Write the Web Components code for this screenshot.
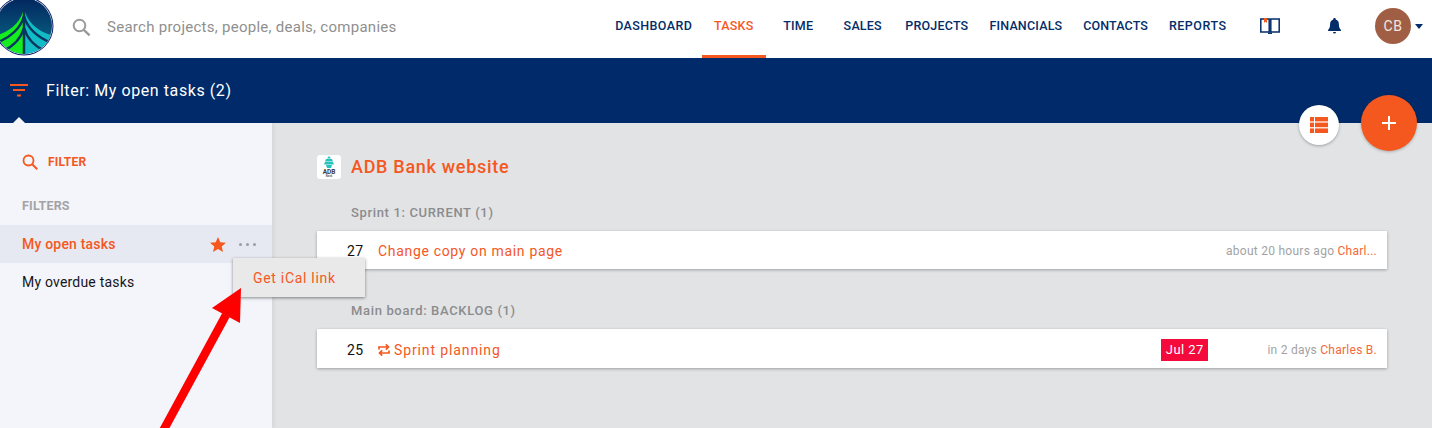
<!DOCTYPE html>
<html>
<head>
<meta charset="utf-8">
<title>Tasks</title>
<style>
  html, body { margin: 0; height: 428px; overflow: hidden; }
  body { font-family: Roboto, "Liberation Sans", sans-serif; background: #e2e3e5; }
  app-shell { width: 1432px; height: 428px; }
</style>
</head>
<body>
<app-shell>
  <top-nav slot="top"></top-nav>
  <filter-bar slot="top">Filter: My open tasks (2)</filter-bar>
  <filter-panel slot="side"></filter-panel>
  <project-group name="ADB Bank website">
    <task-list heading="Sprint 1: CURRENT (1)">
      <task-row num="27" name="Change copy on main page" when="about 20 hours ago" who="Charl..."></task-row>
    </task-list>
    <task-list heading="Main board: BACKLOG (1)">
      <task-row num="25" name="Sprint planning" when="in 2 days" who="Charles B." due="Jul 27" repeat></task-row>
    </task-list>
  </project-group>
</app-shell>

<script>
const ORANGE = '#f4581f';

class AppShell extends HTMLElement {
  constructor() {
    super();
    this.attachShadow({ mode: 'open' });
    this.shadowRoot.innerHTML = `
      <style>
        :host { display: flex; flex-direction: column; position: relative; overflow: hidden; }
        .body { display: flex; flex: 1; min-height: 0; }
        .main { flex: 1; padding: 32px 45px 0; min-width: 0; }
        .fab { position: absolute; border-radius: 50%; display: flex; align-items: center; justify-content: center; }
        .list { left: 1299px; top: 105px; width: 40px; height: 40px; background: #fff; box-shadow: 0 1px 3px rgba(0,0,0,.3); }
        .add { left: 1361px; top: 95px; width: 56px; height: 56px; background: ${ORANGE}; box-shadow: 0 1px 3px rgba(0,0,0,.25); }
        .arrow { position: absolute; left: 150px; top: 285px; }
        .menu { position: absolute; left: 233px; top: 258px; width: 132px; height: 39px; box-sizing: border-box; padding-left: 20px;
          display: flex; align-items: center; background: #e9e9e9; color: ${ORANGE}; font-size: 14px; letter-spacing: .7px;
          box-shadow: 0 1px 3px rgba(0,0,0,.45); }
      </style>
      <slot name="top"></slot>
      <div class="body">
        <slot name="side"></slot>
        <div class="main"><slot></slot></div>
      </div>
      <div class="fab list">
        <svg width="18" height="16" viewBox="0 0 18 16" fill="${ORANGE}">
          <rect x="0" y="0" width="4" height="4.4"/><rect x="5" y="0" width="13" height="4.4"/>
          <rect x="0" y="5.6" width="4" height="4.6"/><rect x="5" y="5.6" width="13" height="4.6"/>
          <rect x="0" y="11.4" width="4" height="4.6"/><rect x="5" y="11.4" width="13" height="4.6"/>
        </svg>
      </div>
      <div class="fab add">
        <svg width="14" height="14" viewBox="0 0 14 14" stroke="#fff" stroke-width="2"><path d="M7 0v14M0 7h14"/></svg>
      </div>
      <div class="menu">Get iCal link</div>
      <svg class="arrow" width="100" height="145" viewBox="0 0 100 145">
        <path d="M13 146L76 30" stroke="#fe0000" stroke-width="8.500" fill="none"/>
        <path d="M91 3L62 23L90 38Z" fill="#fe0000"/>
      </svg>
    `;
  }
}

class TopNav extends HTMLElement {
  constructor() {
    super();
    this.attachShadow({ mode: 'open' });
    const items = ['DASHBOARD', 'TASKS', 'TIME', 'SALES', 'PROJECTS', 'FINANCIALS', 'CONTACTS', 'REPORTS'];
    this.shadowRoot.innerHTML = `
      <style>
        :host { display: flex; align-items: center; height: 58px; background: #fff; overflow: hidden; flex: none; }
        .logo { align-self: flex-start; margin: -4px 6px 0 -6px; flex: none; }
        .search { display: flex; align-items: center; flex: 1; color: #8f8f8f; font-size: 15px; letter-spacing: .27px; padding: 0 0 4px 12px; }
        .search svg { margin-right: 16px; }
        nav { display: flex; height: 58px; margin-right: 1px; }
        nav a { display: flex; align-items: center; justify-content: center; box-sizing: border-box; height: 58px; min-width: 64px; padding: 0 10.500px 8px;
          color: #032d68; font-size: 12.500px; font-weight: 500; letter-spacing: .2px; }
        nav a.DASHBOARD { letter-spacing: .4px; padding-right: 9.500px; }
        nav a.TIME { min-width: 65px; }
        nav a.CONTACTS { letter-spacing: .1px; }
        nav a.REPORTS { letter-spacing: .5px; }
        nav a.on { color: ${ORANGE}; border-bottom: 3px solid ${ORANGE}; padding-bottom: 5px; }
        .tools { display: flex; align-items: center; width: 194px; height: 58px; box-sizing: border-box; padding: 0 0 6px 22px; flex: none; }
        .book { margin-right: 48px; }
        .bell { margin-right: 34px; }
        .avatar { width: 36px; height: 36px; border-radius: 50%; background: #a05f45; color: #f2e6e0; margin-right: 4px;
          display: flex; align-items: center; justify-content: center; font-size: 14px; letter-spacing: .5px; flex: none; }
        .caret { width: 0; height: 0; border: 4.5px solid transparent; border-top: 5px solid #032d68; border-bottom: 0; }
      </style>
      <svg class="logo" width="60" height="60" viewBox="0 0 60 60">
        <defs>
          <linearGradient id="sky" x1="0" y1="0" x2="0" y2="1"><stop offset="0" stop-color="#02265f"/><stop offset="1" stop-color="#0a6f8a"/></linearGradient>
          <clipPath id="disc"><circle cx="30" cy="30" r="28"/></clipPath>
        </defs>
        <circle cx="30" cy="30" r="29.500" fill="#0e1f6b"/>
        <circle cx="30" cy="30" r="28.500" fill="#dfe6ee"/>
        <circle cx="30" cy="30" r="28" fill="url(#sky)"/>
        <g clip-path="url(#disc)">
          <path d="M30 11C28 26 16 36 0 40L4 60L30 60Z" fill="#15ee1e"/>
          <path d="M30 11C32 26 44 36 60 40L56 60L30 60Z" fill="#12bcc6"/>
          <g fill="none" stroke="#08365f" stroke-width="2.500">
            <path d="M30 20C27 32 16 42 2 47"/><path d="M30 32C27 42 20 50 9 55"/>
            <path d="M30 20C33 32 44 42 58 47"/><path d="M30 32C33 42 40 50 51 55"/>
            <path d="M30 11V60"/>
          </g>
        </g>
      </svg>
      <div class="search">
        <svg width="19" height="19" viewBox="0 0 19 19" fill="none" stroke="#9b9b9b" stroke-width="2"><circle cx="7.500" cy="7.500" r="5.800"/><path d="M11.800 11.800L17.600 17.400" stroke-width="2.400"/></svg>
        Search projects, people, deals, companies
      </div>
      <nav>${items.map(t => `<a class="${t}${t === 'TASKS' ? ' on' : ''}">${t}</a>`).join('')}</nav>
      <div class="tools">
        <svg class="book" width="20" height="16" viewBox="0 0 20 16" fill="none" stroke="#032d68" stroke-width="1.500">
          <path d="M.8 1h8.400v13H.8zM10.800 1h8.400v13h-8.400z"/><path d="M8 15.200h4"/><path d="M4 0h3v5L5.500 3.600 4 5z" fill="${ORANGE}" stroke="none"/>
        </svg>
        <svg class="bell" width="13" height="17" viewBox="0 0 13 17" fill="#032d68">
          <path d="M6.500 0a1.200 1.200 0 0 1 1.200 1.500c2.200.6 3.200 2.300 3.200 4.700 0 3.300.8 4.300 2 5.600V13H.100v-1.200c1.200-1.300 2-2.300 2-5.600 0-2.400 1-4.100 3.200-4.700A1.200 1.200 0 0 1 6.500 0z"/>
          <path d="M5 14h3a1.500 1.500 0 0 1-3 0z"/>
        </svg>
        <div class="avatar">CB</div>
        <div class="caret"></div>
      </div>
    `;
  }
}

class FilterBar extends HTMLElement {
  constructor() {
    super();
    this.attachShadow({ mode: 'open' });
    this.shadowRoot.innerHTML = `
      <style>
        :host { display: flex; align-items: center; height: 65px; flex: none; background: #002a69; color: #fff; position: relative;
          font-size: 16px; letter-spacing: .58px; padding-left: 10px; box-sizing: border-box; }
        svg { margin-right: 18px; }
        .notch { position: absolute; left: 13px; bottom: 0; width: 0; height: 0; border: 6px solid transparent; border-bottom: 6px solid #f3f5fa; border-top: 0; }
      </style>
      <svg width="18" height="13" viewBox="0 0 18 13" fill="${ORANGE}"><rect width="18" height="2"/><rect x="3" y="5" width="12" height="2"/><rect x="7" y="10.500" width="4" height="2"/></svg>
      <slot></slot>
      <div class="notch"></div>
    `;
  }
}

class FilterPanel extends HTMLElement {
  constructor() {
    super();
    this.attachShadow({ mode: 'open' });
    this.shadowRoot.innerHTML = `
      <style>
        :host { display: block; width: 272px; flex: none; background: #f3f5fa; font-size: 14px; letter-spacing: .2px; box-shadow: 2px 0 4px rgba(0,0,0,.06); }
        .find { display: flex; align-items: center; height: 26px; margin: 26px 0 0 22px; color: ${ORANGE}; font-weight: 700; font-size: 12px; letter-spacing: .2px; }
        .find svg { margin-right: 10px; }
        h4 { margin: 23px 0 11px 22px; height: 16px; line-height: 16px; font-size: 12.500px; font-weight: 700; color: #a3a3a6; letter-spacing: .2px; }
        .row { display: flex; align-items: center; height: 38px; padding: 0 16px 0 22px; color: #16161a; }
        .row.on { background: #e6e9f1; color: ${ORANGE}; font-weight: 500; }
        .row span { flex: 1; }
        .dots { display: flex; gap: 4px; margin-left: 13px; }
        .dots i { width: 3px; height: 3px; border-radius: 50%; background: #9a9da3; display: block; }
      </style>
      <div class="find">
        <svg width="16" height="16" viewBox="0 0 16 16" fill="none" stroke="${ORANGE}" stroke-width="1.800"><circle cx="6.500" cy="6.500" r="5"/><path d="M10.200 10.200L15.200 15.200" stroke-width="2"/></svg>
        FILTER
      </div>
      <h4>FILTERS</h4>
      <div class="row on">
        <span>My open tasks</span>
        <svg width="16" height="15" viewBox="0 0 16 15" fill="${ORANGE}"><path d="M8 0l2.300 5.200 5.700.5-4.300 3.700 1.300 5.600L8 12l-5 3 1.300-5.600L0 5.700l5.700-.5z"/></svg>
        <div class="dots"><i></i><i></i><i></i></div>
      </div>
      <div class="row"><span>My overdue tasks</span></div>
    `;
  }
}

class ProjectGroup extends HTMLElement {
  constructor() {
    super();
    this.attachShadow({ mode: 'open' });
    const name = this.getAttribute('name');
    this.shadowRoot.innerHTML = `
      <style>
        :host { display: block; }
        header { display: flex; align-items: center; height: 24px; color: ${ORANGE}; font-size: 18px; font-weight: 500; letter-spacing: .7px; }
        header span { margin-top: -2px; }
        .mark { width: 24px; height: 24px; border-radius: 3px; background: #fff; margin-right: 10px; display: flex; flex-direction: column; align-items: center; overflow: hidden; }
        .mark svg { margin-top: 1px; flex: none; }
        .mark b { font-size: 6.500px; line-height: 6px; color: #3a3a3a; letter-spacing: 0; font-weight: 700; }
        .mark i { font-size: 3px; line-height: 3px; color: #555; letter-spacing: 0; font-style: normal; }
      </style>
      <header>
        <div class="mark">
          <svg width="10" height="13" viewBox="0 0 10 13" fill="#26c3bd"><path d="M5 0l2 2.500H3zM2 3h6l1 2.500H1zM1 6h8l1 2.500H0zM2 9h6l-1 3H3z"/></svg>
          <b>ADB</b>
          <i>Bank</i>
        </div>
        <span>${name}</span>
      </header>
      <slot></slot>
    `;
  }
}

class TaskList extends HTMLElement {
  constructor() {
    super();
    this.attachShadow({ mode: 'open' });
    this.shadowRoot.innerHTML = `
      <style>
        :host { display: block; margin-top: 26px; }
        :host(:nth-of-type(n+2)) { margin-top: 0; }
        h5 { margin: 0 0 10px 34px; height: 16px; line-height: 16px; font-size: 13px; font-weight: 500; color: #8b8c8e; letter-spacing: .65px; }
      </style>
      <h5>${this.getAttribute('heading')}</h5>
      <slot></slot>
    `;
  }
}

class TaskRow extends HTMLElement {
  constructor() {
    super();
    this.attachShadow({ mode: 'open' });
    const a = n => this.getAttribute(n);
    const repeat = this.hasAttribute('repeat') ? `
      <svg width="12" height="12" viewBox="0 0 12 12" fill="none" stroke="${ORANGE}" stroke-width="1.700" style="margin-right:4px">
        <path d="M1 5.500V3h8.500M7.800 .4L10.500 3 7.800 5.600M11 6.500V9H2.500M4.200 6.400L1.500 9 4.200 11.600"/>
      </svg>` : '';
    const due = a('due') ? `<div class="due">${a('due')}</div>` : '';
    this.shadowRoot.innerHTML = `
      <style>
        :host { display: flex; align-items: center; width: 1070px; height: 38px; box-sizing: border-box; background: #fff; padding: 1px 10px 0 30px;
          margin-bottom: 34px; box-shadow: 0 1px 3px rgba(0,0,0,.3); font-size: 14px; letter-spacing: .68px; }
        :host([repeat]) { height: 39px; padding-top: 2px; letter-spacing: .88px; }
        .num { width: 31px; color: #111; letter-spacing: .45px; }
        .name { flex: 1; display: flex; align-items: center; color: ${ORANGE}; }
        .due { background: #f40b3c; color: #fff; width: 47px; height: 22px; line-height: 22px; text-align: center; margin: 0 59px 0 0; font-size: 13px; letter-spacing: .45px; }
        .meta { font-size: 12px; color: #a3a3a3; letter-spacing: .26px; white-space: nowrap; }
        .meta em { font-style: normal; color: #f4683a; }
      </style>
      <div class="num">${a('num')}</div>
      <div class="name">${repeat}${a('name')}</div>
      ${due}
      <div class="meta">${a('when')} <em>${a('who')}</em></div>
    `;
  }
}

customElements.define('top-nav', TopNav);
customElements.define('filter-bar', FilterBar);
customElements.define('filter-panel', FilterPanel);
customElements.define('task-row', TaskRow);
customElements.define('task-list', TaskList);
customElements.define('project-group', ProjectGroup);
customElements.define('app-shell', AppShell);
</script>
</body>
</html>
